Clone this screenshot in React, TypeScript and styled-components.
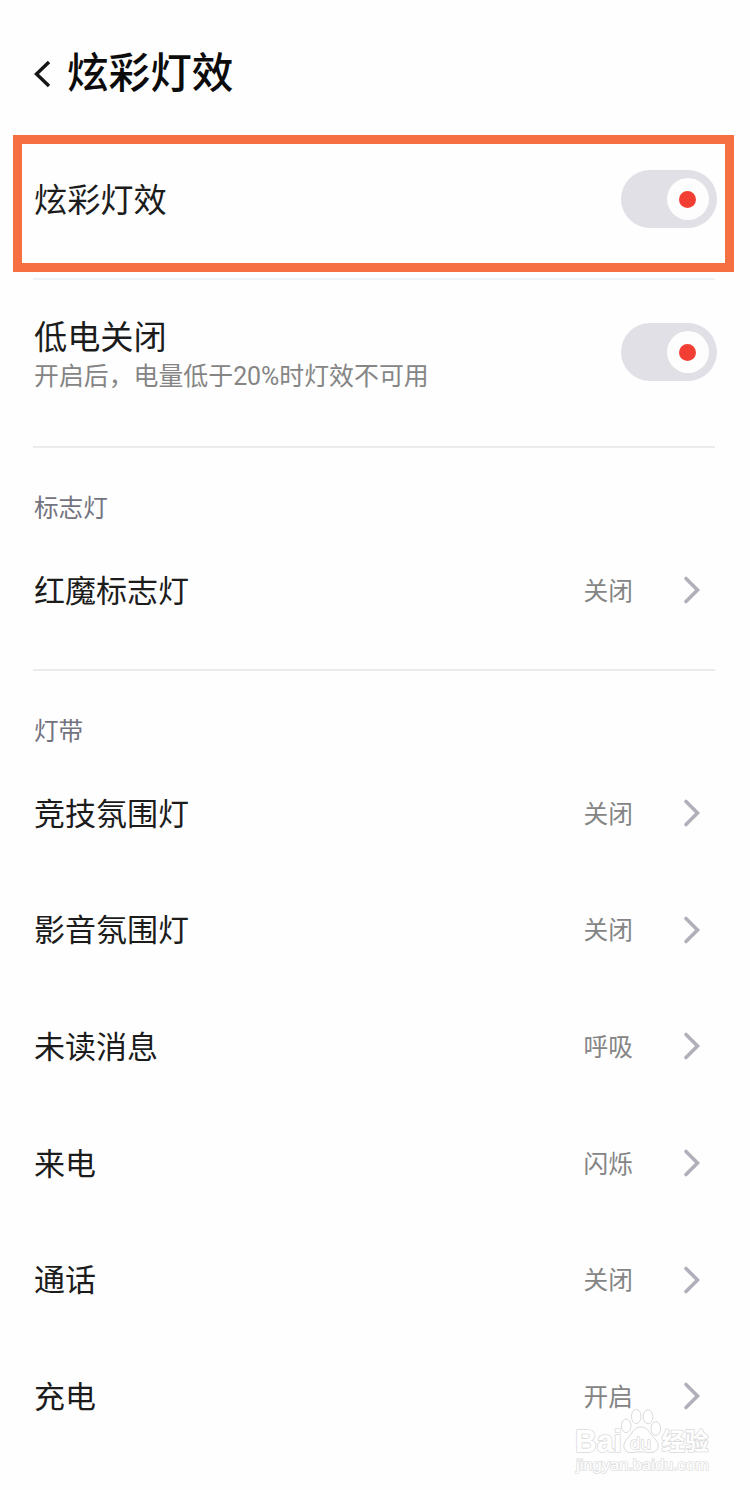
import React from 'react';
import styled, { createGlobalStyle } from 'styled-components';

const GlobalStyle = createGlobalStyle`
  * { box-sizing: border-box; }
  body {
    margin: 0;
    background: #fefefe;
    font-family: Roboto, "Noto Sans CJK SC", sans-serif;
  }
`;

const Page = styled.main`
  position: relative;
  width: 750px;
  height: 1490px;
  overflow: hidden;
  display: flex;
  flex-direction: column;
  background: #fefefe;
`;

const Header = styled.header`
  display: flex;
  align-items: flex-start;
  height: 135px;
  padding: 44px 0 0 33px;
`;

const BackIcon = styled.svg`
  width: 18px;
  height: 30px;
  margin: 15px 16px 0 0;
`;

const Title = styled.h1`
  margin: 0;
  font-size: 41.6px;
  line-height: 60px;
  font-weight: 500;
  color: #0b0b0b;
`;

const HighlightRow = styled.div`
  display: flex;
  justify-content: space-between;
  width: 721px;
  height: 137px;
  margin-left: 13px;
  padding: 26px 8px 0 12px;
  border: 9px solid #f66f43;
`;

const SwitchRow = styled.div`
  display: flex;
  justify-content: space-between;
  height: 166px;
  padding: 43px 33px 0 34px;
`;

const SwitchLabel = styled.div`
  font-size: 33.2px;
  line-height: 62px;
  color: #1c1c1c;
`;

const SwitchText = styled.div`
  display: flex;
  flex-direction: column;
  margin-top: -16px;
`;

const Hint = styled.div`
  margin-top: -9px;
  font-size: 24.9px;
  line-height: 34px;
  color: #858585;
`;

const Track = styled.div`
  display: flex;
  justify-content: flex-end;
  align-items: center;
  width: 96px;
  height: 58px;
  padding-right: 8px;
  border-radius: 29px;
  background: #e0e0e6;
`;

const Knob = styled.div`
  display: flex;
  justify-content: center;
  align-items: center;
  width: 42px;
  height: 42px;
  border-radius: 50%;
  background: #fdfdfd;
`;

const Dot = styled.div`
  width: 17px;
  height: 17px;
  margin-right: 1px;
  border-radius: 50%;
  background: #f33f33;
`;

const Divider = styled.div<{ $top?: number; $color?: string }>`
  flex: none;
  width: 682px;
  height: 2px;
  margin: ${(p) => p.$top ?? 0}px 0 0 33px;
  background: ${(p) => p.$color ?? '#ebebeb'};
`;

const Section = styled.section<{ $height?: number }>`
  flex: none;
  height: ${(p) => (p.$height ? `${p.$height}px` : 'auto')};
  padding: 44px 49px 0 34px;
`;

const SectionTitle = styled.h2`
  margin: 0;
  font-size: 24.6px;
  line-height: 34px;
  font-weight: 400;
  color: #73737f;
`;

const List = styled.div`
  display: flex;
  flex-direction: column;
  margin-top: 6px;
`;

const Item = styled.div`
  display: flex;
  align-items: center;
  height: 116.6px;
`;

const ItemLabel = styled.span`
  flex: 1;
  padding-top: 3px;
  font-size: 31px;
  line-height: 46px;
  color: #1c1c1c;
`;

const ItemValue = styled.span`
  padding-top: 3px;
  font-size: 24.7px;
  line-height: 36px;
  color: #858585;
`;

const ArrowIcon = styled.svg`
  width: 18px;
  height: 30px;
  margin-left: 50px;
`;

const Watermark = styled.svg`
  position: absolute;
  left: 570px;
  top: 1405px;
  width: 145px;
  height: 72px;
`;

const Switch = () => (
  <Track>
    <Knob>
      <Dot />
    </Knob>
  </Track>
);

const Row = ({ label, value }: { label: string; value: string }) => (
  <Item>
    <ItemLabel>{label}</ItemLabel>
    <ItemValue>{value}</ItemValue>
    <ArrowIcon viewBox="0 0 18 30" fill="none" stroke="#b0b0ba" strokeWidth="3.6" strokeLinecap="round" strokeLinejoin="miter">
      <path d="M3 3.5 L14.5 15 L3 26.5" />
    </ArrowIcon>
  </Item>
);

const stripRows = [
  { label: '竞技氛围灯', value: '关闭' },
  { label: '影音氛围灯', value: '关闭' },
  { label: '未读消息', value: '呼吸' },
  { label: '来电', value: '闪烁' },
  { label: '通话', value: '关闭' },
  { label: '充电', value: '开启' },
];

export default function App() {
  return (
    <Page>
      <GlobalStyle />
      <Header>
        <BackIcon viewBox="0 0 18 30" fill="none" stroke="#151515" strokeWidth="3.4">
          <path d="M16 3 L3.500 15 L16 27" />
        </BackIcon>
        <Title>炫彩灯效</Title>
      </Header>
      <HighlightRow>
        <SwitchLabel>炫彩灯效</SwitchLabel>
        <Switch />
      </HighlightRow>
      <Divider $top={6} $color="#eef1f5" />
      <SwitchRow>
        <SwitchText>
          <SwitchLabel>低电关闭</SwitchLabel>
          <Hint>开启后，电量低于20%时灯效不可用</Hint>
        </SwitchText>
        <Switch />
      </SwitchRow>
      <Divider />
      <Section $height={221}>
        <SectionTitle>标志灯</SectionTitle>
        <List>
          <Row label="红魔标志灯" value="关闭" />
        </List>
      </Section>
      <Divider />
      <Section>
        <SectionTitle>灯带</SectionTitle>
        <List>
          {stripRows.map((row) => (
            <Row key={row.label} {...row} />
          ))}
        </List>
      </Section>
      <Watermark viewBox="0 0 145 72" fill="#ffffff" stroke="#dadada" strokeWidth="1" strokeLinejoin="round">
        <text x="5" y="46.500" fontFamily="Liberation Sans" fontWeight="700" fontSize="31" textLength="47" lengthAdjust="spacingAndGlyphs" strokeWidth="1.600" paintOrder="stroke">Bai</text>
        <ellipse cx="56.200" cy="20.800" rx="4.800" ry="6.800" />
        <ellipse cx="66.200" cy="11.500" rx="4.800" ry="7" />
        <ellipse cx="78" cy="11.800" rx="4.800" ry="7" />
        <ellipse cx="85.800" cy="23.500" rx="4.800" ry="6.800" />
        <path d="M71 22 C64 22 62 29 57 34 C51 40 54 48.500 62 47.500 C68 46.500 74 46.500 79 47.500 C88 48.500 91 40 85 34 C80 29 78 22 71 22 Z" />
        <text x="60" y="43.500" fontFamily="Liberation Sans" fontSize="17" textLength="21" lengthAdjust="spacingAndGlyphs" strokeWidth="1.400" paintOrder="stroke">du</text>
        <text x="91.500" y="45" fontFamily="Noto Sans CJK SC" fontWeight="700" fontSize="23.500" strokeWidth="1.600" paintOrder="stroke">经验</text>
        <text x="6" y="64.500" fontFamily="Liberation Sans" fontSize="15.500" textLength="133" lengthAdjust="spacingAndGlyphs" strokeWidth="1.600" stroke="#e0e0e0" paintOrder="stroke">jingyan.baidu.com</text>
      </Watermark>
    </Page>
  );
}
